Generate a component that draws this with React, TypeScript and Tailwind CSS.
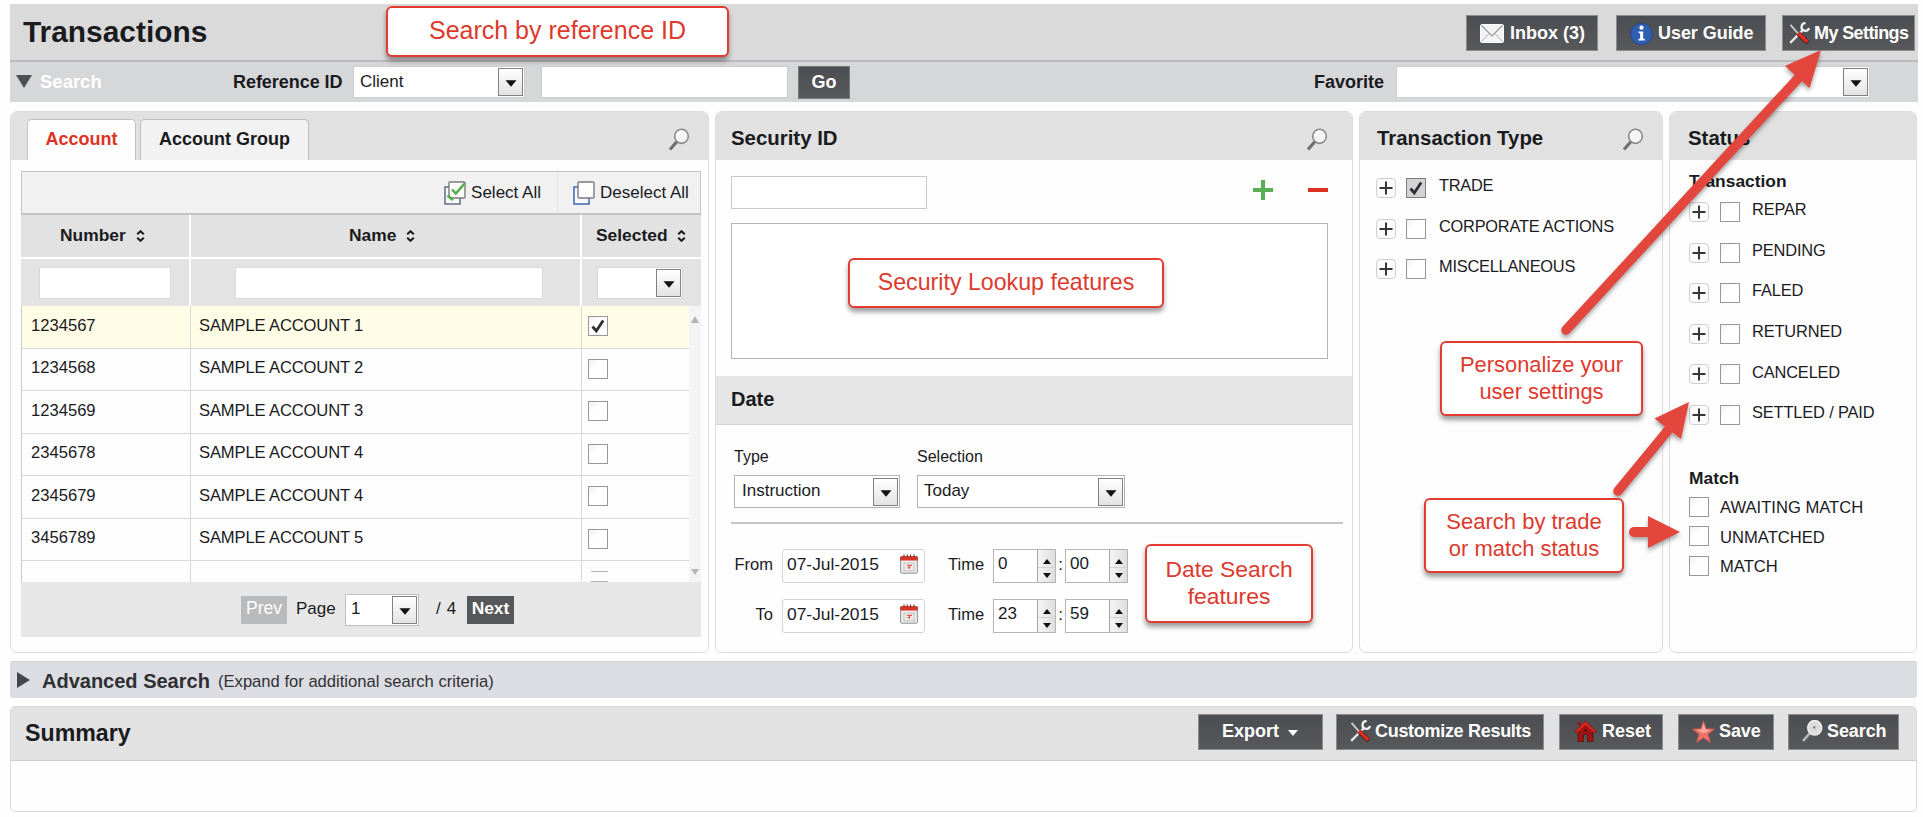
import React, { ReactNode } from 'react';
import clsx from 'clsx';

const accounts = [
  { number: '1234567', name: 'SAMPLE ACCOUNT 1', selected: true },
  { number: '1234568', name: 'SAMPLE ACCOUNT 2', selected: false },
  { number: '1234569', name: 'SAMPLE ACCOUNT 3', selected: false },
  { number: '2345678', name: 'SAMPLE ACCOUNT 4', selected: false },
  { number: '2345679', name: 'SAMPLE ACCOUNT 4', selected: false },
  { number: '3456789', name: 'SAMPLE ACCOUNT 5', selected: false },
];

const transactionTypes = [
  { label: 'TRADE', checked: true },
  { label: 'CORPORATE ACTIONS', checked: false },
  { label: 'MISCELLANEOUS', checked: false },
];

const statuses = ['REPAR', 'PENDING', 'FALED', 'RETURNED', 'CANCELED', 'SETTLED / PAID'];
const matches = ['AWAITING MATCH', 'UNMATCHED', 'MATCH'];

/* ---------- icons ---------- */

const Magnifier = ({ className }: { className?: string }) => (
  <svg viewBox="0 0 22 23" className={clsx('h-[23px] w-[22px]', className)}>
    <path d="M9 13.5 L2 21.5" stroke="#6f6f6f" strokeWidth="3.2" />
    <ellipse cx="13.5" cy="8.3" rx="6.8" ry="7.1" fill="#f4f4f4" stroke="#8a8a8a" strokeWidth="1.6" />
    <path d="M9.5 8 C9.5 5 11.5 3.6 14 3.6" fill="none" stroke="#fff" strokeWidth="1.6" />
  </svg>
);

const SearchGlass = () => (
  <svg viewBox="0 0 22 23" className="h-[23px] w-[22px]">
    <path d="M8.5 13.5 L2 21" stroke="#b9b9b9" strokeWidth="2.6" />
    <ellipse cx="13.7" cy="7.8" rx="7" ry="7.3" fill="#dcdcdc" stroke="#f2f2f2" strokeWidth="1.4" />
    <circle cx="13.5" cy="7.6" r="1.8" fill="#b9b9b9" />
    <circle cx="13.2" cy="7.2" r="0.8" fill="#555" />
  </svg>
);

const Envelope = () => (
  <svg viewBox="0 0 24 19" className="h-[19px] w-[24px]">
    <rect x="0.5" y="0.5" width="23" height="18" rx="1.5" fill="#f3f3f3" stroke="#fff" />
    <path d="M1.5 17.5 L9 9.5 M22.5 17.5 L15 9.5" stroke="#b0b0b0" strokeWidth="1" />
    <path d="M1.5 1.5 L12 12 L22.5 1.5" fill="none" stroke="#999" strokeWidth="1.2" />
  </svg>
);

const Info = () => (
  <svg viewBox="0 0 24 24" className="h-[24px] w-[23px]">
    <circle cx="12" cy="12" r="11.3" fill="#2f5fb3" stroke="#2a4784" />
    <circle cx="12" cy="5.4" r="2.2" fill="#fff" />
    <path d="M9 9.3 h4.7 v7.6 h1.7 v2 h-6.6 v-2 h1.8 v-5.6 H9 z" fill="#fff" />
  </svg>
);

const Tools = () => (
  <svg viewBox="0 0 21 23" className="h-[23px] w-[21px]">
    <path d="M1.2 20.8 L10 12 L14.5 7.5" fill="none" stroke="#e8e8e8" strokeWidth="2.4" />
    <path d="M16.6 1.2 A3.8 3.8 0 1 0 20 6" fill="none" stroke="#f4f4f4" strokeWidth="2.2" />
    <path d="M1.5 2.8 L9.5 12" stroke="#d0d0d0" strokeWidth="1.8" />
    <path d="M9.3 11.5 L18.8 20.6" stroke="#3a1a18" strokeWidth="4.6" />
    <path d="M9 11 L18.5 20" stroke="#e32d22" strokeWidth="3.4" />
  </svg>
);

const House = () => (
  <svg viewBox="0 0 23 23" className="h-[23px] w-[23px]">
    <path d="M4 10 L11.5 4 L19 10 V21.5 H13.5 V14.5 H9.5 V21.5 H4 z" fill="#9c1512" stroke="#5e100e" strokeWidth="0.8" />
    <path d="M3.6 1.5 h3 v4 h-3 z" fill="#9c1512" />
    <path d="M0.8 11.6 L11.5 1 L22.2 11.6 L19.4 12.6 L11.5 5.4 L3.6 12.6 z" fill="#e0261d" stroke="#76120f" strokeWidth="0.7" />
    <rect x="10.3" y="9" width="2.4" height="2.6" fill="#5e100e" />
  </svg>
);

const Star = () => (
  <svg viewBox="0 0 23 23" className="h-[24px] w-[23px]">
    <path d="M11.5 0.5 L14.3 8.3 L22.5 8.6 L16 13.8 L18.4 22 L11.5 17.2 L4.6 22 L7 13.8 L0.5 8.6 L8.7 8.3 z" fill="#f07167" stroke="#d9564d" strokeWidth="0.6" />
    <path d="M11.5 2.5 L13.5 9 L19 9.6 L11.5 13 L4.5 9.6 L9.5 9 z" fill="#f7a79f" />
  </svg>
);

const Calendar = () => (
  <svg viewBox="0 0 18 20" className="h-[20px] w-[18px]">
    <rect x="0.6" y="2.6" width="16.8" height="16.6" rx="1" fill="#ededed" stroke="#8e8e8e" />
    <rect x="0.2" y="2.2" width="17.6" height="4.4" rx="1" fill="#da3327" />
    <path d="M4 0.3 v3 M7.3 0.3 v3 M10.6 0.3 v3 M14 0.3 v3" stroke="#6e2c28" strokeWidth="1" />
    <path d="M3.5 9 h11 M3.5 16.8 h11 M4 9 v8 M14 9 v8" stroke="#bdbdbd" strokeWidth="0.9" />
    <path d="M7 11.3 h5 M9.5 11.3 v3.4 M7.5 13.6 h1.4" stroke="#e0574d" strokeWidth="1.2" />
  </svg>
);

const SelectAllIcon = ({ checked }: { checked?: boolean }) => (
  <svg viewBox="0 0 22 24" className="h-[24px] w-[22px]">
    <rect x="1" y="6" width="15" height="17" fill="#f7f9fd" stroke={checked ? '#5f6f86' : '#3c66b0'} strokeWidth="1.5" />
    <rect x="5" y="1" width="16" height="16" rx="1" fill="#fdfdfd" stroke="#7b7b7b" strokeWidth="1.4" />
    {checked && (
      <>
        <path d="M8 8.5 L11.8 12.6 L21 2" fill="none" stroke="#4fae47" strokeWidth="2.4" />
        <path d="M3.5 14.5 L9 19" fill="none" stroke="#4fae47" strokeWidth="2.6" />
      </>
    )}
  </svg>
);

const Sort = ({ className }: { className?: string }) => (
  <svg viewBox="0 0 9 12" className={clsx('h-[12px] w-[9px]', className)}>
    <path d="M1.2 4.3 L4.5 1.2 L7.8 4.3 M1.2 7.7 L4.5 10.8 L7.8 7.7" fill="none" stroke="#1b1b1b" strokeWidth="2" />
  </svg>
);

const Check = () => (
  <svg viewBox="0 0 18 18" className="h-full w-full">
    <path d="M3.5 9.5 L7.3 14 L14.2 3.5" fill="none" stroke="#2c2e31" strokeWidth="2.8" />
  </svg>
);

/* ---------- controls ---------- */

const Checkbox = ({ checked, grey }: { checked?: boolean; grey?: boolean }) => (
  <span
    role="checkbox"
    aria-checked={!!checked}
    className={clsx(
      'block size-[20px] shrink-0 border',
      grey ? 'border-[#7d7d7d] bg-[#d3d3d3]' : 'border-[#989898] bg-linear-to-br from-[#f1f1f1] to-white to-40%'
    )}
  >
    {checked && <Check />}
  </span>
);

const Expander = () => (
  <span className="flex size-[20px] shrink-0 items-center justify-center rounded-[4px] border border-[#cfcfcf] bg-[#fbfbfb]">
    <svg viewBox="0 0 14 14" className="size-[14px]">
      <path d="M7 0.5 V13.5 M0.5 7 H13.5" stroke="#333539" strokeWidth="2" />
    </svg>
  </span>
);

const Arrow = () => (
  <span className="flex h-[28px] w-[25px] shrink-0 items-center justify-center border border-[#808080] bg-linear-to-b from-white to-[#e3e3e3]">
    <svg viewBox="0 0 12 7" className="mt-[3px] h-[7px] w-[12px]">
      <path d="M0.5 0.3 H11.5 L6 6.8 z" fill="#111" />
    </svg>
  </span>
);

const Select = ({ value, className }: { value?: string; className?: string }) => (
  <div className={clsx('flex shrink-0 items-center justify-between border bg-white pr-px text-[17px]', className)}>
    <span>{value}</span>
    <Arrow />
  </div>
);

const DarkButton = ({ children, className }: { children: ReactNode; className?: string }) => (
  <button
    className={clsx(
      'flex h-[36px] shrink-0 items-center whitespace-nowrap border border-[#8b8c8e] bg-linear-to-b from-[#4b4e52] to-[#57585a] text-[18px] font-bold text-white',
      className
    )}
  >
    {children}
  </button>
);

const Panel = ({ className, children }: { className?: string; children: ReactNode }) => (
  <section className={clsx('flex h-[542px] shrink-0 flex-col overflow-hidden rounded-[7px] border border-[#dcdcde] bg-[#fdfdfd]', className)}>
    {children}
  </section>
);

const PanelHeader = ({ title, className, search }: { title: string; className?: string; search?: boolean }) => (
  <header className={clsx('flex h-[48px] shrink-0 items-center justify-between bg-[#e1e1e1]', className)}>
    <h2 className="pt-[4px] text-[20.4px] font-bold">{title}</h2>
    {search && <Magnifier className="mt-[6px]" />}
  </header>
);

const Spinner = ({ value }: { value: string }) => (
  <div className="flex h-[34px] w-[63px] shrink-0 border border-[#b5b5b5] bg-white">
    <span className="flex w-[44px] items-center border-r border-[#a5a5a5] pb-[3px] pl-[4px] text-[17px]">{value}</span>
    <span className="flex flex-1 flex-col bg-linear-to-r from-[#f6f6f6] to-[#dedede]">
      <span className="flex flex-1 items-end justify-center border-b border-[#d2d2d2] pb-[3px]">
        <svg viewBox="0 0 8 5" className="h-[5px] w-[8px]"><path d="M4 0 L8 5 H0 z" fill="#111" /></svg>
      </span>
      <span className="flex flex-1 items-center justify-center">
        <svg viewBox="0 0 8 5" className="h-[5px] w-[8px]"><path d="M0 0 H8 L4 5 z" fill="#111" /></svg>
      </span>
    </span>
  </div>
);

const DateRow = ({ label, hour, minute, className }: { label: string; hour: string; minute: string; className?: string }) => (
  <div className={clsx('flex h-[34px] items-center', className)}>
    <span className="w-[57px] pb-[3px] text-right text-[16.5px]">{label}</span>
    <div className="ml-[9px] flex h-[34px] w-[143px] items-center justify-between rounded-[3px] border border-[#d4d4d8] bg-white pr-[6px] pl-[4px]">
      <span className="pb-[4px] text-[17.4px]">07-Jul-2015</span>
      <span className="pb-[5px]"><Calendar /></span>
    </div>
    <span className="ml-[23px] w-[45px] pb-[3px] text-[16.5px]">Time</span>
    <Spinner value={hour} />
    <span className="w-[9px] pb-[2px] text-center text-[17px]">:</span>
    <Spinner value={minute} />
  </div>
);

const Callout = ({ className, children }: { className?: string; children: ReactNode }) => (
  <div
    className={clsx(
      'absolute flex items-center justify-center rounded-[6px] border-2 border-[#e23c31] bg-white text-center leading-[27px] whitespace-pre text-[#dd3a2e] shadow-[0_4px_5px_rgba(0,0,0,0.38)]',
      className
    )}
  >
    {children}
  </div>
);

/* ---------- sections ---------- */

const AccountPanel = () => (
  <Panel className="w-[699px]">
    <header className="flex h-[48px] shrink-0 items-end bg-[#e1e1e1] pl-[16px]">
      <div className="flex h-[41px] w-[109px] items-center justify-center rounded-t-[5px] border border-b-0 border-[#c2c2c2] bg-[#fdfdfd] pb-px text-[18px] font-bold text-[#dd3327]">
        Account
      </div>
      <div className="ml-[4px] flex h-[41px] w-[169px] items-center justify-center rounded-t-[5px] border border-b-0 border-[#bdbdbd] bg-[#f2f2f2] pb-px text-[18px] font-bold">
        Account Group
      </div>
      <Magnifier className="mb-[9px] ml-[359px]" />
    </header>

    <div className="mt-[11px] ml-[10px] w-[680px]">
      <div className="flex h-[44px] items-center border border-b-2 border-[#c4c4c6] bg-[#f1f1f1] text-[17px]">
        <div className="flex h-full w-[536px] items-center justify-end border-r border-[#e6e6e6] pr-[16px]">
          <SelectAllIcon checked />
          <span className="ml-[5px] pt-[2px]">Select All</span>
        </div>
        <div className="flex items-center pl-[15px]">
          <SelectAllIcon />
          <span className="ml-[5px] pt-[2px] whitespace-nowrap">Deselect All</span>
        </div>
      </div>

      <div className="grid h-[44px] grid-cols-[170px_391px_119px] border-b-2 border-white bg-[#e2e2e2] text-[17.4px] font-bold">
        <div className="flex items-center border-r-2 border-white pb-px pl-[39px]">Number<Sort className="ml-[10px]" /></div>
        <div className="flex items-center border-r-2 border-white pb-px pl-[158px]">Name<Sort className="ml-[10px]" /></div>
        <div className="flex items-center pb-px pl-[14px]">Selected<Sort className="ml-[9px]" /></div>
      </div>

      <div className="grid h-[47px] grid-cols-[170px_391px_119px] bg-[#e3e3e3]">
        <div className="flex items-center border-r-2 border-white pl-[18px]">
          <input className="h-[32px] w-[132px] border border-[#dadada] bg-white" />
        </div>
        <div className="flex items-center border-r-2 border-white pl-[44px]">
          <input className="h-[32px] w-[308px] border border-[#dadada] bg-white" />
        </div>
        <div className="flex items-center pl-[15px]">
          <Select className="h-[32px] w-[86px] border-[#d6d6d6]" />
        </div>
      </div>

      <div className="flex h-[276px] border-l border-[#c9c9c9]">
        <div className="h-full w-[668px] overflow-hidden">
          {accounts.map((a) => (
            <div
              key={a.number}
              className={clsx(
                'grid h-[42.5px] grid-cols-[169px_391px_108px] border-b-[1.5px] border-[#d8d8da] text-[16.6px]',
                a.selected && 'bg-[#fffde6]'
              )}
            >
              <div className="flex items-center border-r border-[#d8d8da] pb-[2px] pl-[9px]">{a.number}</div>
              <div className="flex items-center border-r border-[#d8d8da] pb-[2px] pl-[8px] tracking-[-0.15px]">{a.name}</div>
              <div className="flex items-center pb-px pl-[6px]"><Checkbox checked={a.selected} /></div>
            </div>
          ))}
          <div className="grid h-[42.5px] grid-cols-[169px_391px_108px]">
            <div className="border-r border-[#d8d8da]" />
            <div className="border-r border-[#d8d8da]" />
            <div className="mt-[10px] ml-[9px] h-[11px] w-[17px] border-y border-[#b4b4b4]" />
          </div>
        </div>
        <div className="flex w-[12px] flex-col items-center justify-between bg-[#f4f4f4] pt-[10px] pb-[7px]">
          <svg viewBox="0 0 8 7" className="h-[7px] w-[8px]"><path d="M4 0 L8 7 H0 z" fill="#b4b4b4" /></svg>
          <svg viewBox="0 0 8 6" className="h-[6px] w-[8px]"><path d="M0 0 H8 L4 6 z" fill="#b4b4b4" /></svg>
        </div>
      </div>

      <div className="flex h-[55px] items-center bg-[#e7e7e7] text-[17.4px]">
        <button className="ml-[220px] h-[28px] w-[46px] bg-[#b9babb] pb-[2px] text-[17.6px] text-white">Prev</button>
        <span className="ml-[9px] w-[49px] text-[17px]">Page</span>
        <Select value="1" className="h-[32px] w-[74px] border-[#bfbfbf] pl-[5px]" />
        <span className="ml-[17px] flex w-[31px] gap-[6px] text-[17px]"><span>/</span><span>4</span></span>
        <button className="h-[28px] w-[47px] bg-[#55575a] pb-[2px] text-[17.4px] font-bold text-white">Next</button>
      </div>
    </div>
  </Panel>
);

const SecurityPanel = () => (
  <Panel className="w-[638px]">
    <PanelHeader title="Security ID" className="pr-[24px] pl-[15px]" search />
    <div className="mt-[16px] ml-[15px] flex h-[34px] w-[597px]">
      <input className="h-[33px] w-[196px] border border-[#c9c9cd] bg-white" />
      <svg viewBox="0 0 20 20" className="mt-[4px] ml-[326px] size-[20px]">
        <path d="M10 0 V20 M0 10 H20" stroke="#57ae53" strokeWidth="4" />
      </svg>
      <div className="mt-[12px] ml-[35px] h-[4px] w-[20px] bg-[#d9301f]" />
    </div>
    <div className="mt-[13px] ml-[15px] h-[136px] w-[597px] shrink-0 border border-[#b5b5b5] bg-white" />

    <div className="mt-[17px] flex h-[49px] shrink-0 items-center border-b border-[#d4d4d4] bg-[#e6e6e6] pb-[3px] pl-[15px]">
      <h2 className="text-[20px] font-bold">Date</h2>
    </div>

    <div className="mt-[22px] flex gap-[17px] pl-[18px]">
      <div className="w-[166px]">
        <div className="h-[28px] text-[16px]">Type</div>
        <Select value="Instruction" className="h-[33px] border-[#b3b3b3] pl-[7px]" />
      </div>
      <div className="w-[208px]">
        <div className="h-[28px] text-[16px]">Selection</div>
        <Select value="Today" className="h-[33px] border-[#b3b3b3] pl-[6px]" />
      </div>
    </div>

    <div className="mt-[14px] ml-[15px] h-[2px] w-[612px] shrink-0 bg-[#c4c4c4]" />
    <DateRow label="From" hour="0" minute="00" className="mt-[25px]" />
    <DateRow label="To" hour="23" minute="59" className="mt-[16px]" />
  </Panel>
);

const TypePanel = () => (
  <Panel className="w-[304px]">
    <PanelHeader title="Transaction Type" className="pr-[18px] pl-[17px]" search />
    <div className="flex flex-col gap-[20.6px] pt-[18px] pl-[16px]">
      {transactionTypes.map((t) => (
        <div key={t.label} className="flex h-[20px] items-center">
          <Expander />
          <div className="mr-[13px] ml-[10px]"><Checkbox checked={t.checked} grey={t.checked} /></div>
          <span className="pb-[4px] text-[16.4px] tracking-[-0.25px]">{t.label}</span>
        </div>
      ))}
    </div>
  </Panel>
);

const StatusPanel = () => (
  <Panel className="w-[248px]">
    <PanelHeader title="Status" className="pl-[18px]" />
    <div className="pt-[8px] pl-[19px]">
      <h3 className="h-[34px] text-[17.4px] leading-[26px] font-bold">Transaction</h3>
      <div className="flex flex-col gap-[20.6px]">
        {statuses.map((s) => (
          <div key={s} className="flex h-[20px] items-center">
            <Expander />
            <div className="mr-[12px] ml-[11px]"><Checkbox /></div>
            <span className="pb-[4px] text-[16.4px] tracking-[-0.15px]">{s}</span>
          </div>
        ))}
      </div>
      <h3 className="mt-[40px] h-[32px] text-[17.4px] leading-[26px] font-bold">Match</h3>
      <div className="flex flex-col gap-[9.5px]">
        {matches.map((m) => (
          <div key={m} className="flex h-[20px] items-center">
            <Checkbox />
            <span className="ml-[11px] pt-[2px] text-[16.6px]">{m}</span>
          </div>
        ))}
      </div>
    </div>
  </Panel>
);

const Annotations = () => (
  <>
    <svg viewBox="0 0 1923 817" className="pointer-events-none absolute inset-0 h-full w-full drop-shadow-[0_3px_2px_rgba(0,0,0,0.35)]">
      <g stroke="#e2463c" strokeLinecap="round" fill="#e2463c">
        <path d="M1566 330 L1803 73" strokeWidth="9.5" />
        <path d="M1618 491 L1674 423" strokeWidth="9.5" />
        <path d="M1634 532 L1656 532" strokeWidth="10" />
        <path d="M1821 50 L1785 66 L1809.5 88 z" stroke="none" />
        <path d="M1689 402 L1654.5 418.5 L1681 439 z" stroke="none" />
        <path d="M1680 532 L1648 516 V548 z" stroke="none" />
      </g>
    </svg>
    <Callout className="top-[6px] left-[386px] h-[51px] w-[343px] pb-[2px] text-[25px]">Search by reference ID</Callout>
    <Callout className="top-[258px] left-[848px] h-[50px] w-[316px] pb-[2px] text-[23.2px]">Security Lookup features</Callout>
    <Callout className="top-[341px] left-[1440px] h-[75px] w-[203px] pb-[2px] text-[21.9px]">{'Personalize your\nuser settings'}</Callout>
    <Callout className="top-[498px] left-[1424px] h-[75px] w-[200px] pb-px text-[22px]">{'Search by trade\nor match status'}</Callout>
    <Callout className="top-[544px] left-[1145px] h-[79px] w-[168px] pb-[2px] text-[22.9px]">{'Date Search\nfeatures'}</Callout>
  </>
);

export default function App() {
  return (
    <div className="relative h-[817px] w-[1923px] overflow-hidden bg-[#fefefe] pt-[4px] pl-[10px] font-['Liberation_Sans',Arial,sans-serif] leading-[1.2] text-[#1a1b1e]">
      <header className="flex h-[58px] w-[1908px] items-center border-b-2 border-[#bbbbbd] bg-[#dadada] pl-[13px]">
        <h1 className="w-[1443px] text-[29.9px] font-bold">Transactions</h1>
        <DarkButton className="mt-[2px] w-[132px] gap-[6px] pt-px pl-[13px]"><Envelope />Inbox (3)</DarkButton>
        <DarkButton className="mt-[2px] ml-[18px] w-[150px] gap-[5px] pt-px pl-[13px] tracking-[-0.05px]"><Info />User Guide</DarkButton>
        <DarkButton className="mt-[2px] ml-[16px] w-[133px] gap-[4px] pt-px pl-[6px] tracking-[-0.6px]"><Tools />My Settings</DarkButton>
      </header>

      <div className="flex h-[40px] w-[1908px] items-center bg-[#d6d7d9] pl-[6px] text-[18px] font-bold">
        <svg viewBox="0 0 16 13" className="mb-[2px] h-[13px] w-[16px]"><path d="M0 0 H16 L8 13 z" fill="#4d4f53" /></svg>
        <span className="ml-[8px] w-[193px] pt-px text-[18.5px] text-white">Search</span>
        <span className="w-[120px] pt-px tracking-[-0.05px]">Reference ID</span>
        <Select value="Client" className="h-[32px] w-[172px] border-[#cfcfcf] pl-[6px] font-normal" />
        <input className="ml-[16px] h-[32px] w-[247px] border border-[#cbcbcb] bg-white" />
        <button className="ml-[10px] h-[33px] w-[52px] border border-[#77787a] bg-linear-to-b from-[#4b4e52] to-[#57585a] pt-px text-white">Go</button>
        <span className="ml-[464px] w-[82px] pt-px">Favorite</span>
        <Select className="h-[32px] w-[474px] border-[#cfcfcf]" />
      </div>

      <main className="mt-[9px] flex">
        <AccountPanel />
        <div className="w-[6px]" />
        <SecurityPanel />
        <div className="w-[6px]" />
        <TypePanel />
        <div className="w-[6px]" />
        <StatusPanel />
      </main>

      <div className="mt-[8px] flex h-[37px] w-[1907px] items-center rounded-[3px] border-t border-[#d2d2d6] bg-[#dcdde2] pl-[7px] text-[#2e3034]">
        <svg viewBox="0 0 13 16" className="mb-[1px] h-[16px] w-[13px]"><path d="M0 0 L13 8 L0 16 z" fill="#45474b" /></svg>
        <span className="ml-[12px] w-[176px] pt-[2px] text-[20px] font-bold">Advanced Search</span>
        <span className="pt-[3px] text-[16.6px]">(Expand for additional search criteria)</span>
      </div>

      <section className="mt-[8px] h-[106px] w-[1907px] overflow-hidden rounded-[5px] border border-[#d9d9db] bg-[#fefefe]">
        <header className="flex h-[54px] items-center border-b border-[#cdcdcd] bg-[#e2e2e2] pl-[14px]">
          <h2 className="w-[1173px] text-[23.2px] font-bold">Summary</h2>
          <DarkButton className="mb-[4px] w-[125px] pl-[23px]">
            Export
            <svg viewBox="0 0 10 6" className="mt-[3px] ml-[9px] h-[6px] w-[10px]"><path d="M0 0 H10 L5 6 z" fill="#fff" /></svg>
          </DarkButton>
          <DarkButton className="mb-[4px] ml-[13px] w-[208px] gap-[4px] pl-[13px] tracking-[-0.3px]"><Tools />Customize Results</DarkButton>
          <DarkButton className="mb-[4px] ml-[15px] w-[104px] gap-[5px] pl-[14px]"><House />Reset</DarkButton>
          <DarkButton className="mb-[4px] ml-[15px] w-[96px] gap-[4px] pl-[13px] tracking-[-0.1px]"><Star />Save</DarkButton>
          <DarkButton className="mb-[4px] ml-[14px] w-[111px] gap-[4px] pl-[12px] tracking-[-0.1px]"><SearchGlass />Search</DarkButton>
        </header>
      </section>

      <Annotations />
    </div>
  );
}
